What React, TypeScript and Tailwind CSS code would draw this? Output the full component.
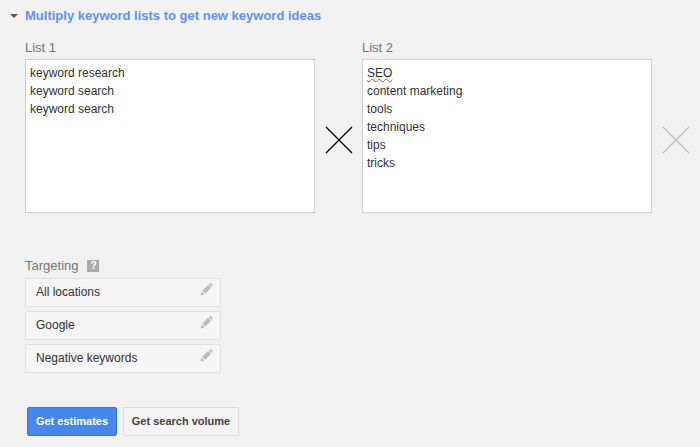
import { ReactNode } from "react"

function Cross({ className }: { className: string }) {
  return (
    <svg width="28" height="28" viewBox="0 0 28 28" className={className} aria-hidden="true">
      <path d="M1 1 L27 27 M27 1 L1 27" stroke="currentColor" strokeWidth="1.3" fill="none" />
    </svg>
  )
}

function Pencil() {
  return (
    <svg width="13" height="13" viewBox="0 0 14 14" className="text-[#bcbcbc]" aria-hidden="true">
      <path d="M0.5 13.5 L1.6 9.2 L4.8 12.4 Z M2.4 8.4 L8.8 2 L12 5.2 L5.6 11.6 Z M9.6 1.2 L10.6 0.4 Q11.2 0 11.8 0.4 L13.4 2 Q13.9 2.6 13.4 3.2 L12.7 4.4 Z" fill="currentColor" />
    </svg>
  )
}

function KeywordList({ title, children }: { title: string; children: ReactNode }) {
  return (
    <div className="w-[290px] flex-none">
      <div className="h-[19px] text-[13px] leading-[19px] text-[#757575]">{title}</div>
      <div className="mt-[2px] h-[154px] border border-[#cfcfcf] bg-white px-[4px] py-[4px] text-[12px] leading-[18px] text-[#333]">
        {children}
      </div>
    </div>
  )
}

function TargetRow({ label }: { label: string }) {
  return (
    <div className="flex h-[29px] w-[196px] items-start justify-between rounded-[2px] border border-[#e0e0e0] bg-[#f5f5f5] pl-[10px] pr-[7px]">
      <span className="pt-[5px] text-[12px] leading-[16px] text-[#333]">{label}</span>
      <span className="pt-[4px]">
        <Pencil />
      </span>
    </div>
  )
}

export default function App() {
  return (
    <div className="h-[447px] w-[700px] overflow-hidden bg-[#f1f1f1] font-['Liberation_Sans',Arial,sans-serif]">
      <div className="flex items-center pl-[10px] pt-[8px]">
        <span className="h-0 w-0 border-x-[4px] border-t-[4px] border-x-transparent border-t-[#555]" />
        <span className="ml-[7px] text-[13px] leading-[16px] font-bold text-[#5e90ff]">
          Multiply keyword lists to get new keyword ideas
        </span>
      </div>

      <div className="mt-[14px] flex items-center pl-[25px]">
        <KeywordList title="List 1">
          <div>keyword research</div>
          <div>keyword search</div>
          <div>keyword search</div>
        </KeywordList>
        <Cross className="mx-[10px] mt-[29px] flex-none text-black" />
        <div className="-ml-[1px]">
          <KeywordList title="List 2">
            <div>
              <span className="underline decoration-[#e04040] decoration-wavy decoration-1">SEO</span>
            </div>
            <div>content marketing</div>
            <div>tools</div>
            <div>techniques</div>
            <div>tips</div>
            <div>tricks</div>
          </KeywordList>
        </div>
        <Cross className="ml-[10px] mt-[29px] flex-none text-[#bdbdbd]" />
      </div>

      <div className="mt-[44px] flex items-center pl-[25px]">
        <span className="text-[13px] leading-[17px] text-[#757575]">Targeting</span>
        <span className="ml-[9px] flex h-[12px] w-[12px] items-center justify-center bg-[#aaa] text-[10px] leading-none font-bold text-white">
          ?
        </span>
      </div>

      <div className="mt-[4px] flex flex-col gap-[4px] pl-[25px]">
        <TargetRow label="All locations" />
        <TargetRow label="Google" />
        <TargetRow label="Negative keywords" />
      </div>

      <div className="mt-[34px] flex gap-[6px] pl-[27px]">
        <button className="h-[29px] w-[90px] rounded-[2px] border border-[#3079ed] bg-[#4787ed] text-[11px] font-bold text-white">
          Get estimates
        </button>
        <button className="h-[29px] w-[116px] rounded-[2px] border border-[#dcdcdc] bg-[#f3f3f3] text-[11px] font-bold text-[#444]">
          Get search volume
        </button>
      </div>
    </div>
  )
}
